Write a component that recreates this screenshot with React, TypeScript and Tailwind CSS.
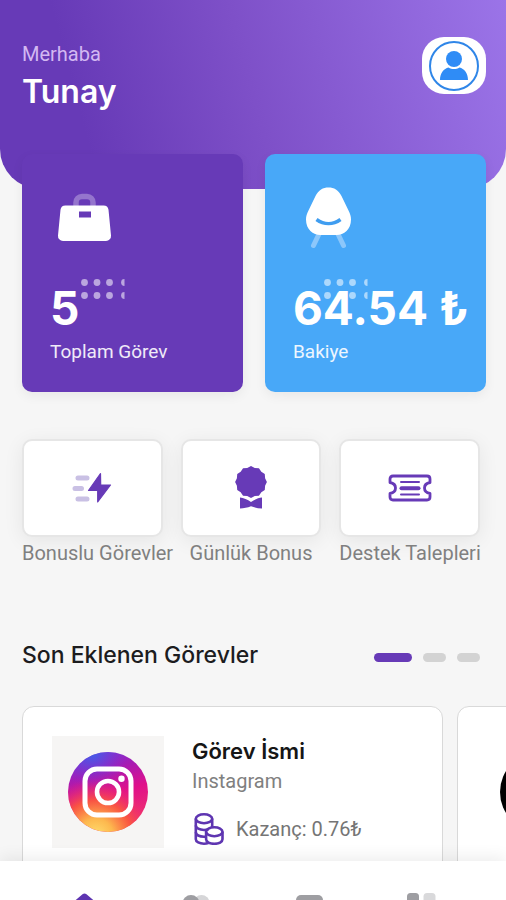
import React from 'react';

interface StatCardProps {
  value: string;
  label: string;
  className: string;
  children: React.ReactNode;
}

interface QuickActionProps {
  label: string;
  children: React.ReactNode;
}

interface TaskCardProps {
  title: string;
  platform: string;
  reward: string;
  logo: React.ReactNode;
}

function AvatarIcon() {
  return (
    <svg viewBox="0 0 50 50" className="w-[50px] h-[50px]" aria-hidden="true">
      <circle cx="25" cy="25" r="24" fill="none" stroke="#2f86e8" strokeWidth="2" />
      <circle cx="25" cy="18" r="8" fill="#2f8cf6" />
      <path d="M11 39c0-7 4-11.600 8.500-12.600 3.300 2.200 7.700 2.200 11 0C35 27.400 39 32 39 39z" fill="#2f8cf6" />
    </svg>
  );
}

function BagIcon() {
  return (
    <svg viewBox="0 0 72 64" className="w-[72px] h-16" aria-hidden="true">
      <path d="M26 20v-3.500a6 6 0 0 1 6-6h5a6 6 0 0 1 6 6V20" fill="none" stroke="#9575cd" strokeWidth="5.500" />
      <path
        fillRule="evenodd"
        fill="#fff"
        d="M15.500 19.500h38a5 5 0 0 1 5 4.300l2.500 25.700a5 5 0 0 1-5 5.500H13a5 5 0 0 1-5-5.500l2.500-25.700a5 5 0 0 1 5-4.300zM29 25.500v6h12v-6z"
      />
    </svg>
  );
}

function ChairIcon() {
  return (
    <svg viewBox="0 0 72 64" className="w-[72px] h-16" aria-hidden="true">
      <path d="M27 46l-6.500 13.500M44 46l6.500 13.500" fill="none" stroke="#8cc7fb" strokeWidth="5" strokeLinecap="round" />
      <path d="M35.500 1.500c5.500 0 10 2.500 13 8.500l7 14.500c1.800 3.700 2.500 6 2.500 9 0 10-7 15.500-14.500 15.500h-16C20 49 13 43.500 13 33.500c0-3 .7-5.300 2.500-9l7-14.500c3-6 7.500-8.500 13-8.500z" fill="#fff" />
      <path d="M23.500 33.500c7.500 5.300 16.500 5.300 24 0" fill="none" stroke="#3f9df0" strokeWidth="3.600" />
    </svg>
  );
}

function DotPattern() {
  const xs = [3.5, 16, 28.5];
  return (
    <svg viewBox="0 0 44 22" className="absolute left-[59px] top-[124px] w-11 h-[22px] text-white/55" fill="currentColor" aria-hidden="true">
      {[4.5, 17.5].map((y) => (
        <g key={y}>
          {xs.map((x) => (
            <circle key={x} cx={x} cy={y} r="3.400" />
          ))}
          <path d={`M43.500 ${y - 3.4}a3.400 3.400 0 0 0 0 6.800z`} />
        </g>
      ))}
    </svg>
  );
}

function BoltIcon() {
  return (
    <svg viewBox="0 0 40 32" className="w-10 h-8" aria-hidden="true">
      <path d="M6 6h9M3 16.500h6.500M6 27h9" stroke="#c9c0e4" strokeWidth="5" strokeLinecap="round" />
      <path d="M28.500 1.500L16.500 18.500h9.200v11.500L38.500 13H28.700z" fill="#673ab7" stroke="#673ab7" strokeWidth="1.200" strokeLinejoin="round" />
    </svg>
  );
}

function MedalIcon() {
  // twelve-sided scalloped rosette
  const points = Array.from({ length: 24 }, (_, i) => {
    const r = i % 2 === 0 ? 15.9 : 14.6;
    const a = (i * Math.PI) / 12 - Math.PI / 2;
    return `${(16 + r * Math.cos(a)).toFixed(2)},${(16 + r * Math.sin(a)).toFixed(2)}`;
  }).join(' ');
  return (
    <svg viewBox="0 0 32 44" className="w-8 h-11" fill="#673ab7" aria-hidden="true">
      <polygon points={points} />
      <path d="M5 31.500c3.500.3 7.500 2 11 4.500 3.500-2.500 7.500-4.200 11-4.500v11c-3.800-.2-7.500-1-11-2.300-3.500 1.300-7.200 2.100-11 2.300z" />
    </svg>
  );
}

function TicketIcon() {
  return (
    <svg viewBox="0 0 44 28" className="w-11 h-7" fill="none" stroke="#673ab7" aria-hidden="true">
      <path
        strokeWidth="2.800"
        strokeLinejoin="round"
        d="M5 2h34c2 0 3 1 3 3v3.500c-3.200.6-5.500 2.700-5.500 5.500s2.300 4.900 5.500 5.500V23c0 2-1 3-3 3H5c-2 0-3-1-3-3v-3.500C5.200 18.900 7.500 16.800 7.500 14S5.200 9.100 2 8.500V5c0-2 1-3 3-3z"
      />
      <path strokeWidth="2" strokeLinecap="round" d="M13 8h18M13 20.500h18" />
      <path strokeWidth="4" strokeLinecap="round" d="M13.500 14.200h17" />
    </svg>
  );
}

function CoinsIcon() {
  return (
    <svg viewBox="0 0 30 32" className="w-[30px] h-8" fill="none" stroke="#5e35b1" strokeWidth="2.600" aria-hidden="true">
      <ellipse cx="10" cy="5.800" rx="8.200" ry="4.500" />
      <path d="M1.800 5.800v20.400c0 2.600 3.600 4.500 8.200 4.500 1.600 0 3-.2 4.300-.7M18.200 5.800v8.500" />
      <path d="M1.800 12.500c0 2.500 3.600 4.500 8.200 4.500 1.700 0 3.100-.3 4.400-.8M1.800 19.300c0 2.500 3.600 4.500 8.200 4.500h1.500" />
      <ellipse cx="20.300" cy="18.800" rx="8.200" ry="4.500" />
      <path d="M12.100 18.800v7.500c0 2.600 3.600 4.500 8.200 4.500s8.200-1.900 8.200-4.500v-7.500" />
    </svg>
  );
}

function InstagramLogo() {
  return (
    <svg viewBox="0 0 80 80" className="w-20 h-20" aria-hidden="true">
      <defs>
        <linearGradient id="ig-base" x1="0.300" y1="0" x2="0.600" y2="1">
          <stop offset="0" stopColor="#7a35d6" />
          <stop offset="0.250" stopColor="#a51cb4" />
          <stop offset="0.550" stopColor="#e0108a" />
          <stop offset="1" stopColor="#f0386a" />
        </linearGradient>
        <radialGradient id="ig-warm" cx="0.350" cy="1.050" r="0.720">
          <stop offset="0" stopColor="#ffe070" />
          <stop offset="0.300" stopColor="#fdb84e" />
          <stop offset="0.620" stopColor="#fb5a3c" stopOpacity="0.900" />
          <stop offset="1" stopColor="#f0207a" stopOpacity="0" />
        </radialGradient>
        <radialGradient id="ig-cool" cx="0.300" cy="0" r="0.450">
          <stop offset="0" stopColor="#3b63ea" />
          <stop offset="1" stopColor="#7c2fd8" stopOpacity="0" />
        </radialGradient>
      </defs>
      <circle cx="40" cy="40" r="40" fill="url(#ig-base)" />
      <circle cx="40" cy="40" r="40" fill="url(#ig-warm)" />
      <circle cx="40" cy="40" r="40" fill="url(#ig-cool)" />
      <rect x="17" y="17" width="46" height="46" rx="12" fill="none" stroke="#fff" strokeWidth="5" />
      <circle cx="40" cy="40" r="11" fill="none" stroke="#fff" strokeWidth="4.600" />
      <circle cx="53.500" cy="26.700" r="3.200" fill="#fff" />
    </svg>
  );
}

function DarkLogo() {
  return (
    <svg viewBox="0 0 80 80" className="w-20 h-20" aria-hidden="true">
      <circle cx="40" cy="40" r="40" fill="#000" />
    </svg>
  );
}

function StatCard({ value, label, className, children }: StatCardProps) {
  return (
    <div className={`relative rounded-[10px] pt-8 pb-7 pl-7 text-white shadow-[0_4px_12px_rgba(0,0,0,0.06)] ${className}`}>
      {children}
      <DotPattern />
      <p className="relative mt-[34px] font-['Inter',sans-serif] text-[46px] leading-[48px] font-bold whitespace-nowrap">{value}</p>
      <p className="mt-2 text-[19px] leading-6 text-white/90">{label}</p>
    </div>
  );
}

function QuickAction({ label, children }: QuickActionProps) {
  return (
    <button type="button" className="flex min-w-0 flex-col items-start">
      <span className="flex h-[98px] w-full items-center justify-center rounded-[10px] border-2 border-[#e6e6e6] bg-white shadow-[0_4px_20px_rgba(0,0,0,0.07)]">
        {children}
      </span>
      <span className="relative mt-1 w-max min-w-full text-center text-xl leading-6 whitespace-nowrap text-[#808080]">{label}</span>
    </button>
  );
}

function TaskCard({ title, platform, reward, logo }: TaskCardProps) {
  return (
    <article className="flex w-[87%] shrink-0 gap-7 rounded-xl border border-[#d9d9d9] bg-white p-[29px]">
      <div className="flex h-28 w-28 shrink-0 items-center justify-center bg-[#f6f5f4]">{logo}</div>
      <div>
        <h3 className="font-['Inter',sans-serif] text-[22px] leading-[30px] font-semibold text-[#161616]">{title}</h3>
        <p className="text-xl leading-[30px] text-[#808080]">{platform}</p>
        <div className="mt-[17px] flex items-center gap-3 pl-0.5">
          <CoinsIcon />
          <span className="text-xl leading-8 text-[#757575]">{reward}</span>
        </div>
      </div>
    </article>
  );
}

function BottomNav() {
  const items = [
    {
      label: 'Ana Sayfa',
      icon: <path d="M12.500 1.300a3 3 0 0 1 4 0L28 11v14a3 3 0 0 1-3 3H4a3 3 0 0 1-3-3V11z" fill="#5e35b1" />,
    },
    {
      label: 'Arkadaşlar',
      icon: (
        <>
          <circle cx="19.500" cy="10" r="8" fill="#d6d6d8" />
          <circle cx="9" cy="10.500" r="8.500" fill="#9e9ea2" />
        </>
      ),
    },
    { label: 'Cüzdan', icon: <rect x="1" y="2" width="27" height="24" rx="5" fill="#9e9ea2" /> },
    {
      label: 'Menü',
      icon: (
        <>
          <rect x="0" y="0" width="12" height="12" rx="3.500" fill="#9e9ea2" />
          <rect x="16.500" y="0" width="12" height="12" rx="3.500" fill="#d9d9db" />
        </>
      ),
    },
  ];

  return (
    <nav className="relative z-10 h-[39px] shrink-0 bg-white px-7 pt-8 shadow-[0_-4px_16px_rgba(0,0,0,0.07)]">
      <div className="grid grid-cols-4">
        {items.map((item) => (
          <a key={item.label} href="#" aria-label={item.label} className="flex justify-center">
            <svg viewBox="0 0 29 29" className="w-[29px] h-[29px]" aria-hidden="true">
              {item.icon}
            </svg>
          </a>
        ))}
      </div>
    </nav>
  );
}

export default function App() {
  return (
    <div className="flex h-screen flex-col overflow-hidden bg-[#f6f6f6] font-['Roboto',sans-serif]">
      <main className="min-h-0 flex-1 overflow-hidden">
        <header className="flex items-start justify-between rounded-b-[40px] bg-linear-[75deg,#673ab7_18%,#7e50c8_50%,#9b74e8] pt-[37px] pr-5 pb-[75px] pl-[22px]">
          <div className="pt-[5px]">
            <p className="text-xl leading-6 text-[#d3b8f2]">Merhaba</p>
            <h1 className="mt-1 font-['Inter',sans-serif] text-[32px] leading-[44px] font-semibold text-white">Tunay</h1>
          </div>
          <button type="button" aria-label="Profil" className="flex h-[57px] w-16 items-center justify-center rounded-[22px] bg-white">
            <AvatarIcon />
          </button>
        </header>

        <section className="-mt-[35px] grid grid-cols-2 gap-[22px] pr-5 pl-[22px]">
          <StatCard value="5" label="Toplam Görev" className="bg-[#673ab7]">
            <BagIcon />
          </StatCard>
          <StatCard value="64.54 ₺" label="Bakiye" className="bg-[#48a8f8]">
            <ChairIcon />
          </StatCard>
        </section>

        <section className="mt-[47px] grid grid-cols-3 gap-[18px] pr-[26px] pl-[22px]">
          <QuickAction label="Bonuslu Görevler">
            <BoltIcon />
          </QuickAction>
          <QuickAction label="Günlük Bonus">
            <MedalIcon />
          </QuickAction>
          <QuickAction label="Destek Talepleri">
            <TicketIcon />
          </QuickAction>
        </section>

        <section className="mt-[74px]">
          <div className="flex items-center justify-between pr-[26px] pl-[22px]">
            <h2 className="font-['Inter',sans-serif] text-[23px] leading-8 font-medium text-[#1c1c1e]">Son Eklenen Görevler</h2>
            <div className="flex gap-[11px] pt-1">
              <span className="h-[9px] w-[38px] rounded-full bg-[#673ab7]" />
              <span className="h-[9px] w-[23px] rounded-full bg-[#d3d3d3]" />
              <span className="h-[9px] w-[23px] rounded-full bg-[#d3d3d3]" />
            </div>
          </div>
          <div className="mt-[35px] flex gap-[14px] overflow-hidden pl-[22px]">
            <TaskCard title="Görev İsmi" platform="Instagram" reward="Kazanç: 0.76₺" logo={<InstagramLogo />} />
            <article className="flex w-[87%] shrink-0 items-center rounded-xl border border-[#d9d9d9] bg-white pl-[42px]">
              <DarkLogo />
            </article>
          </div>
        </section>
      </main>
      <BottomNav />
    </div>
  );
}
